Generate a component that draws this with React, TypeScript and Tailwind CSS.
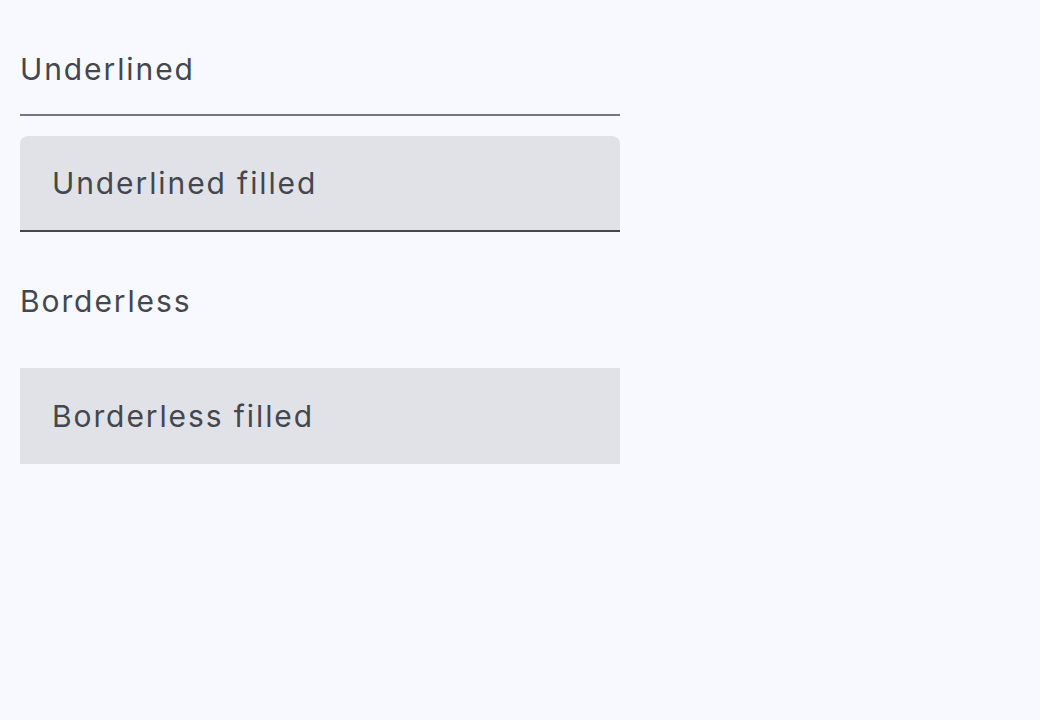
import React from "react";

const base =
  "w-[600px] h-24 text-[30px] tracking-[1.9px] text-[#44474e] placeholder:text-[#44474e] outline-none";

export default function App() {
  return (
    <div className="min-h-[720px] bg-[#f8f9ff] p-5 font-['Inter',sans-serif]">
      <div className="flex flex-col gap-5">
        <input
          placeholder="Underlined"
          className={`${base} bg-transparent pt-[3px] border-b-2 border-[#74777f]`}
        />
        <input
          placeholder="Underlined filled"
          className={`${base} bg-[#e1e2e8] px-8 rounded-t-lg border-b-2 border-[#44474e]`}
        />
        <input placeholder="Borderless" className={`${base} bg-transparent pt-[2px]`} />
        <input
          placeholder="Borderless filled"
          className={`${base} bg-[#e1e2e8] px-8`}
        />
      </div>
    </div>
  );
}
